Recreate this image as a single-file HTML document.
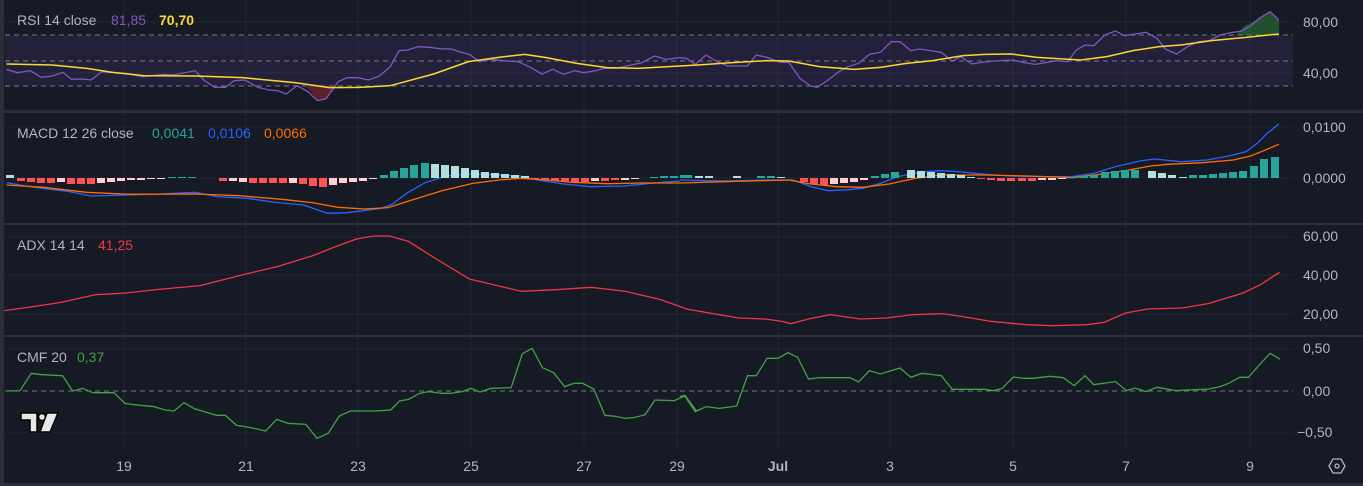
<!DOCTYPE html>
<html><head><meta charset="utf-8"><style>
html,body{margin:0;padding:0;background:#161a25;}
svg{display:block;}
text{font-family:"Liberation Sans",sans-serif;font-size:14px;}
</style></head><body>
<svg width="1363" height="486" viewBox="0 0 1363 486" xmlns="http://www.w3.org/2000/svg">
<rect width="1363" height="486" fill="#161a25"/>
<rect x="0" y="0" width="4" height="486" fill="#2a2e39"/>
<g stroke="#232733" stroke-width="1">
<line x1="124" y1="0" x2="124" y2="448"/><line x1="246" y1="0" x2="246" y2="448"/>
<line x1="358" y1="0" x2="358" y2="448"/><line x1="471" y1="0" x2="471" y2="448"/>
<line x1="584" y1="0" x2="584" y2="448"/><line x1="677" y1="0" x2="677" y2="448"/>
<line x1="778" y1="0" x2="778" y2="448"/><line x1="890" y1="0" x2="890" y2="448"/>
<line x1="1013" y1="0" x2="1013" y2="448"/><line x1="1126" y1="0" x2="1126" y2="448"/>
<line x1="1250" y1="0" x2="1250" y2="448"/>
<line x1="5" y1="22" x2="1293" y2="22"/><line x1="5" y1="73" x2="1293" y2="73"/>
<line x1="5" y1="127" x2="1293" y2="127"/><line x1="5" y1="178" x2="1293" y2="178"/>
<line x1="5" y1="237" x2="1293" y2="237"/><line x1="5" y1="275" x2="1293" y2="275"/><line x1="5" y1="314" x2="1293" y2="314"/>
<line x1="5" y1="349" x2="1293" y2="349"/><line x1="5" y1="433" x2="1293" y2="433"/>
</g>
<rect x="4" y="110" width="1359" height="3" fill="#2a2e39"/>
<rect x="4" y="223" width="1359" height="2" fill="#2a2e39"/>
<rect x="4" y="335" width="1359" height="2" fill="#2a2e39"/>
<rect x="0" y="483" width="1363" height="3" fill="#2a2e39"/>

<rect x="5" y="35" width="1288" height="51" fill="#7e57c2" fill-opacity="0.13"/>
<g stroke="#787b86" stroke-dasharray="5,4" stroke-width="1">
<line x1="5" y1="35" x2="1293" y2="35"/><line x1="5" y1="61" x2="1293" y2="61"/><line x1="5" y1="86" x2="1293" y2="86"/>
<line x1="5" y1="391" x2="1293" y2="391"/>
</g>
<polygon points="1236,35 1244,26 1257,20 1270,12 1279,20 1279,35" fill="#2e7d32" fill-opacity="0.55"/>
<polygon points="306,86 317,100 326,99 334,86" fill="#b22833" fill-opacity="0.45"/>

<g transform="scale(0.43365,0.33333)" fill="none">
<polyline vector-effect="non-scaling-stroke" stroke="#7e57c2" stroke-width="1.3" points="15,208 40,218 70,212 95,232 120,228 145,217 165,238 190,237 210,240 235,215 260,218 290,220 330,230 380,223 400,225 450,212 470,240 495,262 520,262 540,242 565,240 595,262 620,270 640,272 660,282 685,257 710,275 732,302 752,296 780,245 800,233 825,233 850,240 875,228 900,200 920,152 940,150 965,140 990,142 1015,146 1040,147 1085,165 1105,185 1130,178 1160,182 1195,185 1220,200 1250,222 1275,208 1300,223 1325,212 1345,218 1370,213 1395,205 1420,205 1445,198 1480,188 1510,168 1535,178 1568,173"/>
<polyline vector-effect="non-scaling-stroke" stroke="#fdd835" stroke-width="1.5" points="15,192 120,195 200,205 260,217 330,227 450,228 560,233 680,248 760,263 830,262 900,257 1000,222 1080,185 1150,172 1210,163 1260,173 1330,190 1400,203 1470,205 1568,198"/>
<polyline vector-effect="non-scaling-stroke" stroke="#2962ff" stroke-width="1.3" points="15,548 60,558 110,567 160,575 210,588 290,585 370,582 450,577 500,590 570,595 640,608 700,615 755,640 800,638 850,630 880,625 905,612 940,578 980,548 1030,528 1080,522 1130,524 1200,528 1240,540 1300,552 1360,560 1440,558 1500,550 1568,543"/>
<polyline vector-effect="non-scaling-stroke" stroke="#ff6d00" stroke-width="1.3" points="15,555 100,562 200,577 300,583 450,582 550,587 650,598 720,608 780,622 840,627 895,623 950,600 1020,572 1090,550 1150,540 1200,535 1260,540 1320,547 1400,551 1480,549 1568,549"/>
</g>
<g transform="translate(680,0) scale(0.43554,0.33333)" fill="none">
<polyline vector-effect="non-scaling-stroke" stroke="#7e57c2" stroke-width="1.3" points="0,173 15,175 35,193 60,165 85,185 110,198 155,198 175,165 200,172 230,187 250,187 275,235 300,258 315,262 340,240 365,215 385,200 410,190 435,163 460,157 485,125 505,125 530,152 550,147 575,152 600,157 625,183 645,170 670,192 695,187 720,183 765,180 790,188 815,193 840,188 865,182 890,185 910,150 930,135 950,137 975,105 1000,93 1020,107 1045,102 1070,97 1095,115 1115,148 1140,162 1165,140 1190,125 1215,122 1240,105 1265,98 1290,93 1310,78 1330,55 1355,35 1375,60"/>
<polyline vector-effect="non-scaling-stroke" stroke="#fdd835" stroke-width="1.5" points="0,198 40,195 120,188 200,182 250,183 320,200 400,208 460,202 520,190 580,182 650,167 700,163 760,162 820,172 920,180 980,170 1040,152 1100,140 1150,135 1220,122 1300,112 1375,102"/>
<polyline vector-effect="non-scaling-stroke" stroke="#2962ff" stroke-width="1.3" points="0,540 100,543 200,540 260,540 300,560 340,572 380,570 420,565 460,550 500,530 560,515 600,512 640,515 700,523 760,528 840,530 900,530 950,520 1000,500 1060,482 1090,477 1150,485 1210,480 1260,468 1300,455 1325,430 1350,398 1375,372"/>
<polyline vector-effect="non-scaling-stroke" stroke="#ff6d00" stroke-width="1.3" points="0,549 100,545 250,540 300,552 360,560 420,562 480,552 540,535 600,525 700,525 800,528 900,533 970,522 1030,510 1080,498 1120,493 1200,488 1270,480 1310,468 1340,452 1375,433"/>
</g>

<g>
<path fill="#b2dfdb" d="M6,175h8v3h-8z M431,178v-14h8v14z M441,178v-13h8v13z M451,178v-12h8v12z M461,178v-10h8v10z M471,178v-8h8v8z M481,178v-6h8v6z M491,178v-5h8v5z M501,178v-4h8v4z M511,178v-3h8v3z M521,178v-2h8v2z M695,178v-2h8v2z M705,178v-2h8v2z M733,178v-2h8v2z M777,178v-1h8v1z M907,178v-8h8v8z M917,178v-7h8v7z M927,178v-6h8v6z M937,178v-5h8v5z M947,178v-4h8v4z M957,178v-3h8v3z M967,178v-1h8v1z M1148,178v-7h8v7z M1158,178v-5h8v5z M1168,178v-3h8v3z M1179,178v-1h8v1z"/>
<path fill="#26a69a" d="M168,178v-1h8v1z M178,178v-1h8v1z M188,178v-1h8v1z M380,178v-3h8v3z M390,178v-7h8v7z M400,178v-10h8v10z M410,178v-13h8v13z M421,178v-15h8v15z M650,178v-1h8v1z M660,178v-2h8v2z M670,178v-2h8v2z M680,178v-3h8v3z M684,178v-3h8v3z M757,178v-2h8v2z M767,178v-2h8v2z M871,178v-2h8v2z M881,178v-4h8v4z M891,178v-6h8v6z M1070,178v-1h8v1z M1080,178v-2h8v2z M1090,178v-3h8v3z M1101,178v-6h8v6z M1111,178v-7h8v7z M1121,178v-8h8v8z M1131,178v-8h8v8z M1189,178v-3h8v3z M1199,178v-3h8v3z M1209,178v-4h8v4z M1219,178v-5h8v5z M1229,178v-6h8v6z M1239,178v-7h8v7z M1250,178v-12h8v12z M1260,178v-19h8v19z M1271,178v-21h8v21z"/>
<path fill="#ff5252" d="M17,178v3h8v-3z M27,178v4h8v-4z M37,178v5h8v-5z M47,178v5h8v-5z M67,178v6h8v-6z M77,178v6h8v-6z M87,178v6h8v-6z M219,178v3h8v-3z M229,178v3h8v-3z M249,178v5h8v-5z M259,178v5h8v-5z M269,178v5h8v-5z M279,178v5h8v-5z M299,178v6h8v-6z M309,178v8h8v-8z M319,178v9h8v-9z M531,178v1h8v-1z M541,178v2h8v-2z M551,178v3h8v-3z M561,178v3h8v-3z M571,178v4h8v-4z M581,178v4h8v-4z M601,178v3h8v-3z M611,178v2h8v-2z M800,178v4h8v-4z M810,178v6h8v-6z M820,178v7h8v-7z M977,178v1h8v-1z M987,178v2h8v-2z M997,178v3h8v-3z M1007,178v3h8v-3z M1018,178v3h8v-3z M1028,178v3h8v-3z"/>
<path fill="#ffcdd2" d="M57,178v4h8v-4z M97,178v5h8v-5z M107,178v4h8v-4z M117,178v3h8v-3z M127,178v2h8v-2z M137,178v2h8v-2z M147,178v1h8v-1z M157,178v1h8v-1z M229,178v3h8v-3z M239,178v4h8v-4z M289,178v5h8v-5z M329,178v7h8v-7z M339,178v5h8v-5z M349,178v4h8v-4z M359,178v3h8v-3z M369,178v1h8v-1z M591,178v3h8v-3z M621,178v2h8v-2z M631,178v1h8v-1z M830,178v6h8v-6z M840,178v5h8v-5z M850,178v4h8v-4z M860,178v2h8v-2z M1038,178v2h8v-2z M1048,178v2h8v-2z M1058,178v1h8v-1z"/>
</g>

<g transform="translate(0,243) scale(0.86926,0.33333)" fill="none">
<polyline vector-effect="non-scaling-stroke" stroke="#f23645" stroke-width="1.3" points="5,203 40,190 70,178 110,155 145,150 180,140 230,128 280,95 320,70 360,38 385,12 410,-12 430,-21 448,-21 470,-5 500,45 540,108 600,145 640,140 680,133 720,145 760,170 790,198 820,212 850,225 880,228 900,235 910,242 930,228 955,215 990,228 1020,225 1050,215 1085,212 1110,222 1140,235 1180,245 1210,248 1250,245 1270,238 1295,210 1320,198 1360,195 1390,182 1430,150 1450,125 1472,88"/>
</g>
<g transform="translate(0,330) scale(0.44643,0.33333)" fill="none">
<polyline vector-effect="non-scaling-stroke" stroke="#43a047" stroke-width="1.3" points="15,183 45,182 70,130 95,134 140,137 163,183 185,175 208,188 255,188 280,220 300,224 345,230 370,240 390,243 412,218 435,236 460,246 485,256 505,256 530,286 555,291 595,303 620,268 645,280 685,283 710,325 735,310 760,258 785,243 840,243 875,240 895,213 915,208 940,190 960,185 990,190 1010,190 1035,185 1055,175 1075,186 1100,175 1145,173 1170,71 1192,55 1215,113 1240,128 1265,170 1285,160 1305,160 1330,177 1355,256 1380,259 1400,265 1420,263 1445,254 1467,210 1510,212 1535,197 1560,243 1568,238"/>
</g>
<g transform="translate(680,330) scale(0.43554,0.33333)" fill="none">
<polyline vector-effect="non-scaling-stroke" stroke="#43a047" stroke-width="1.3" points="0,200 10,196 35,245 60,230 90,235 130,228 155,137 175,137 200,85 225,85 248,68 270,82 295,147 320,143 390,143 410,156 435,122 460,132 505,114 530,142 555,130 600,137 625,178 700,178 720,182 740,175 765,141 790,145 810,145 850,139 880,143 905,167 930,137 950,164 1000,155 1025,182 1045,174 1070,185 1095,172 1140,182 1160,180 1210,178 1240,170 1260,160 1285,142 1305,142 1330,105 1355,70 1378,88"/>
</g>

<g fill="#b2b5be">
<text x="17" y="25">RSI 14 close</text>
<text x="17" y="138">MACD 12 26 close</text>
<text x="17" y="250">ADX 14 14</text>
<text x="17" y="362">CMF 20</text>
</g>
<text x="111" y="25" fill="#7e57c2">81,85</text>
<text x="159" y="25" fill="#fdd835" font-weight="bold">70,70</text>
<text x="152" y="138" fill="#26a69a">0,0041</text>
<text x="208" y="138" fill="#2962ff">0,0106</text>
<text x="264" y="138" fill="#ff6d00">0,0066</text>
<text x="98" y="250" fill="#f23645">41,25</text>
<text x="77" y="362" fill="#43a047">0,37</text>

<g fill="#b2b5be">
<text x="1303" y="27">80,00</text>
<text x="1303" y="78">40,00</text>
<text x="1303" y="132">0,0100</text>
<text x="1303" y="183">0,0000</text>
<text x="1303" y="241">60,00</text>
<text x="1303" y="280">40,00</text>
<text x="1303" y="319">20,00</text>
<text x="1303" y="353">0,50</text>
<text x="1303" y="396">0,00</text>
<text x="1297" y="437">−0,50</text>
</g>
<g fill="#b2b5be" text-anchor="middle">
<text x="124" y="471">19</text><text x="246" y="471">21</text><text x="358" y="471">23</text>
<text x="471" y="471">25</text><text x="584" y="471">27</text><text x="677" y="471">29</text>
<text x="778" y="471" font-weight="bold">Jul</text><text x="890" y="471">3</text>
<text x="1013" y="471">5</text><text x="1126" y="471">7</text><text x="1250" y="471">9</text>
</g>
<g fill="none" stroke="#b2b5be" stroke-width="1.3">
<polygon points="1329,466 1333,459 1341,459 1345,466 1341,473 1333,473"/>
<circle cx="1337" cy="466" r="2"/>
</g>
<g fill="#e8e8e8" stroke="#000" stroke-width="1.5">
<path d="M21,413h16v19h-7v-12h-9z"/>
<circle cx="42" cy="417" r="3.5"/>
<path d="M47,413h11l-8,19h-10z"/>
</g>
</svg>
</body></html>
